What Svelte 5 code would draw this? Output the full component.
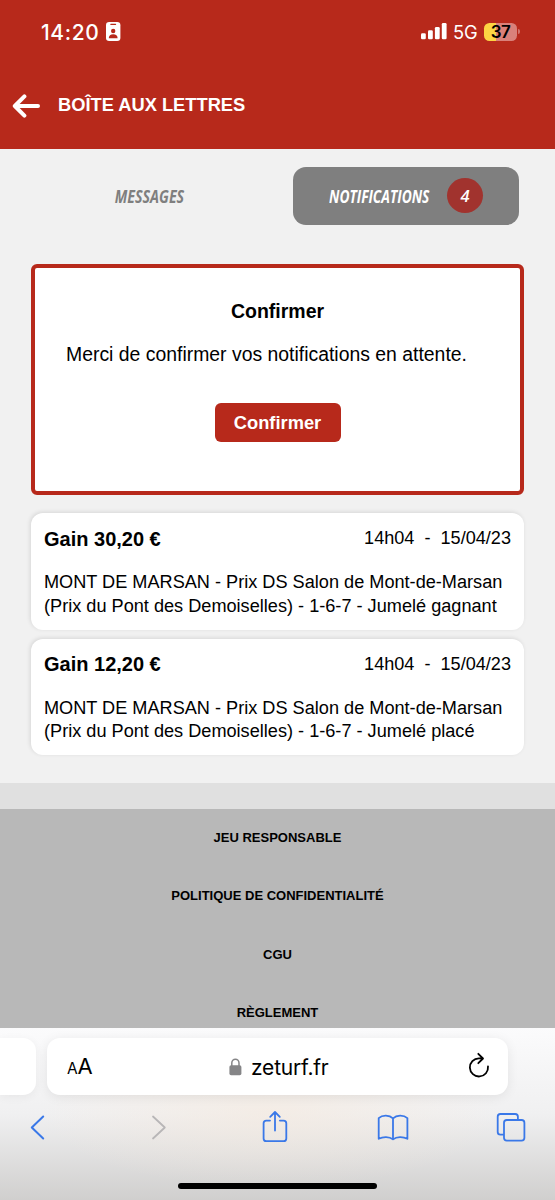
<script>
  const gains = [
    { title: 'Gain 30,20 €', type: 'gagnant' },
    { title: 'Gain 12,20 €', type: 'placé' }
  ];
  const links = ['JEU RESPONSABLE', 'POLITIQUE DE CONFIDENTIALITÉ', 'CGU', 'RÈGLEMENT'];
</script>

<div class="screen">
  <header>
    <div class="status">
      <span class="clock">14:20</span>
      <svg class="badge-icon" width="15" height="20" viewBox="0 0 15 20">
        <rect width="14.4" height="19" rx="3.2" fill="#fff" />
        <rect x="4.2" y="1.7" width="6" height="1.3" rx=".65" fill="#b7291b" />
        <circle cx="7.2" cy="9" r="2.2" fill="#b7291b" />
        <path d="M2.8 16.2c0-2.6 1.7-4 4.4-4s4.4 1.4 4.4 4z" fill="#b7291b" />
      </svg>
      <svg class="signal" width="26" height="17" viewBox="0 0 26 17" fill="#fff">
        <rect x="0" y="10.3" width="4.8" height="6" rx="1.3" />
        <rect x="7" y="7.3" width="4.8" height="9" rx="1.3" />
        <rect x="13.9" y="4" width="4.8" height="12.3" rx="1.3" />
        <rect x="20.8" y="0" width="4.8" height="16.3" rx="1.3" />
      </svg>
      <span class="net">5G</span>
      <div class="battery"><span>37</span></div>
      <i class="nub"></i>
    </div>
    <div class="bar">
      <svg width="28" height="24" viewBox="0 0 28 24" fill="none" stroke="#fff" stroke-width="4" stroke-linecap="round" stroke-linejoin="round">
        <path d="M12.4 2.4 2.8 12l9.6 9.6M3.4 12h22.6" />
      </svg>
      <h1>BOÎTE AUX LETTRES</h1>
    </div>
  </header>

  <main>
    <nav>
      <div class="tab"><span class="cond messages">MESSAGES</span></div>
      <div class="tab active">
        <span class="cond notifications">NOTIFICATIONS</span>
        <span class="count">4</span>
      </div>
    </nav>
    <section class="confirm">
      <h2>Confirmer</h2>
      <p>Merci de confirmer vos notifications en attente.</p>
      <button>Confirmer</button>
    </section>
    {#each gains as gain}
      <article>
        <div class="top"><h3>{gain.title}</h3><time>14h04&nbsp; - &nbsp;15/04/23</time></div>
        <p>MONT DE MARSAN - Prix DS Salon de Mont-de-Marsan<br />(Prix du Pont des Demoiselles) - 1-6-7 - Jumelé {gain.type}</p>
      </article>
    {/each}
  </main>

  <div class="strip"></div>
  <footer>
    {#each links as link}<div>{link}</div>{/each}
  </footer>

  <div class="browser">
    <div class="address-row">
      <div class="previous"></div>
      <div class="address">
        <span class="aa"><small>A</small>A</span>
        <svg class="lock" width="13" height="18" viewBox="0 0 13 18">
          <path d="M2.8 9V5a3.6 3.7 0 0 1 7.2 0v4" fill="none" stroke="#858587" stroke-width="1.5" />
          <rect x=".4" y="7.3" width="12" height="10" rx="1.7" fill="#858587" />
        </svg>
        <span class="host">zeturf.fr</span>
        <svg class="reload" width="22" height="26" viewBox="0 0 22 26" fill="none" stroke="#000" stroke-width="1.8" stroke-linecap="round" stroke-linejoin="round">
          <path d="M20 14.4A9.1 9.1 0 1 1 10.9 6.3h3.6M10.3 1.8l4.7 4.7-4.7 4.7" />
        </svg>
      </div>
    </div>
    <div class="tools">
      <svg width="555" height="40" viewBox="0 1106 555 40" fill="none" stroke="#3a78e8" stroke-width="1.8" stroke-linecap="round" stroke-linejoin="round">
        <path d="M43.2 1116.5 31.8 1127.5l11.4 11" stroke-width="2" />
        <path d="M153 1116.5l11.8 11-11.8 11" stroke="#b8b6b7" />
        <path d="M270 1120.6h-3.7q-2.7 0-2.7 2.7v15.2q0 2.7 2.7 2.7h17.3q2.7 0 2.7-2.7v-15.2q0-2.7-2.7-2.7h-3.7M275 1130.5v-18M270.2 1116.8l4.8-4.8 4.8 4.8" />
        <path d="M393 1118.4c-3.6-3.5-10.6-3.6-14.3-.2v20.6c4.2-2.2 10.6-2.4 14.3.6 3.7-3 10.2-2.8 14.4-.6v-20.6c-3.8-3.4-10.8-3.3-14.4.2zv20" />
        <path d="M503.2 1134.7h-2.8q-2.7 0-2.7-2.7v-15.3q0-2.7 2.7-2.7h14.8q2.7 0 2.7 2.7v3" />
        <rect x="504" y="1120" width="20.4" height="20.6" rx="2.8" />
      </svg>
    </div>
    <div class="home"></div>
  </div>
</div>

<style>
  :global(body) { margin: 0; }
  .screen { width: 555px; height: 1200px; overflow: hidden; display: flex; flex-direction: column; background: #f1f1f1; color: #000; font-family: "Liberation Sans", Arial, sans-serif; }
  h1, h2, h3, p { margin: 0; }
  svg { display: block; flex: none; }
  header { height: 149px; box-sizing: border-box; flex: none; background: #b7291b; color: #fff; padding-top: 18px; }
  .status { display: flex; align-items: center; height: 27px; font-family: Inter, sans-serif; padding: 0 38px 0 41px; }
  .clock { font-size: 21px; font-weight: 500; width: 65px; letter-spacing: .6px; margin-top: 1px; }
  .badge-icon { margin-top: 1px; }
  .signal { margin-left: auto; margin-right: 6px; }
  .net { font-size: 18.3px; width: 31px; letter-spacing: -.1px; margin-top: 1px; }
  .battery { width: 33px; height: 18px; border-radius: 5.5px; background: linear-gradient(90deg, #fdd443 12px, #d9817a 12px); color: #000; text-align: center; font-size: 17px; line-height: 18.5px; font-weight: 600; letter-spacing: -.5px; }
  .nub { width: 2px; height: 5px; border-radius: 0 3px 3px 0; background: #d0746d; margin-left: 1px; margin-right: -3px; }
  .bar { display: flex; align-items: center; height: 24px; margin-top: 49px; padding-left: 12px; }
  h1 { font-size: 18.3px; line-height: 24px; margin-left: 18px; margin-top: -2px; }
  main { height: 634px; flex: none; box-sizing: border-box; padding: 18px 31px 0; }
  nav { display: flex; justify-content: space-between; padding: 0 5px; height: 58px; }
  .tab { width: 226px; display: flex; align-items: center; justify-content: center; border-radius: 13px; font: italic 700 17px "Open Sans", sans-serif; color: #7f7f7f; }
  .active { background: #7f7f7f; color: #fff; box-sizing: border-box; justify-content: flex-start; padding-left: 36px; }
  .cond { transform: scaleX(.84); white-space: nowrap; }
  .notifications { transform: scaleX(.81); transform-origin: left; width: 118px; }
  .count { width: 36px; height: 35px; border-radius: 50%; background: #a1332e; text-align: center; line-height: 36px; font-size: 16.5px; font-weight: 600; margin-top: -2px; }
  .confirm { border: 4px solid #b7291b; border-radius: 6px; background: #fff; box-sizing: border-box; width: 493px; height: 231px; margin: 39px 0 18px; text-align: center; padding-top: 31px; }
  h2 { font-size: 19.5px; line-height: 24px; }
  .confirm p { font-size: 19.4px; line-height: 24px; margin: 19px 0 37px -22px; }
  button { display: block; width: 126px; height: 39px; padding: 0; margin: 0 auto; background: #b7291b; border: 0; border-radius: 6px; color: #fff; font: bold 18.3px "Liberation Sans", sans-serif; }
  article { box-sizing: border-box; width: 493px; height: 116.5px; border-radius: 12px; background: #fff; margin-bottom: 9px; padding: 13px 13px 0; box-shadow: -1px -1px 4px #0000001c; }
  .top { display: flex; justify-content: space-between; align-items: center; height: 26px; }
  h3 { font-size: 20px; }
  time { font-size: 18.1px; margin-top: -1px; }
  article p { font-size: 18.15px; line-height: 23.5px; white-space: nowrap; margin-top: 19px; }
  .strip { height: 26px; flex: none; background: #e0e0e0; }
  footer { height: 219px; flex: none; overflow: hidden; background: #b8b8b8; }
  footer div { height: 58.3px; line-height: 58px; font-size: 13px; font-weight: 700; text-align: center; }
  .browser { height: 172px; flex: none; background: radial-gradient(ellipse 230px 75px at 270px 85px, #f6e9dc90, #f6e9dc00), linear-gradient(#fbfbfc, #f0f0f1 50%, #d0cfce); display: flex; flex-direction: column; align-items: center; }
  .address-row { width: 555px; display: flex; gap: 11px; padding-top: 10px; }
  .previous { width: 36px; height: 57px; border-radius: 0 13px 13px 0; background: #fff; box-shadow: 0 2px 10px #0000000d; }
  .address { width: 461px; height: 57px; box-sizing: border-box; border-radius: 13px; background: #fff; display: flex; align-items: center; padding: 0 18px 0 20px; font-family: Inter, sans-serif; box-shadow: 0 2px 12px #00000014; }
  .aa { font-size: 22px; width: 162px; line-height: 26px; letter-spacing: -.3px; margin-top: 2px; }
  .aa small { font-size: 15.5px; }
  .host { font-size: 21px; margin-left: 9px; margin-top: 2px; letter-spacing: -.2px; }
  .reload { margin-left: auto; margin-top: -4px; }
  .tools { height: 40px; margin-top: 11px; }
  .home { width: 199px; height: 6px; border-radius: 3px; background: #000; margin-top: 37px; }
</style>
